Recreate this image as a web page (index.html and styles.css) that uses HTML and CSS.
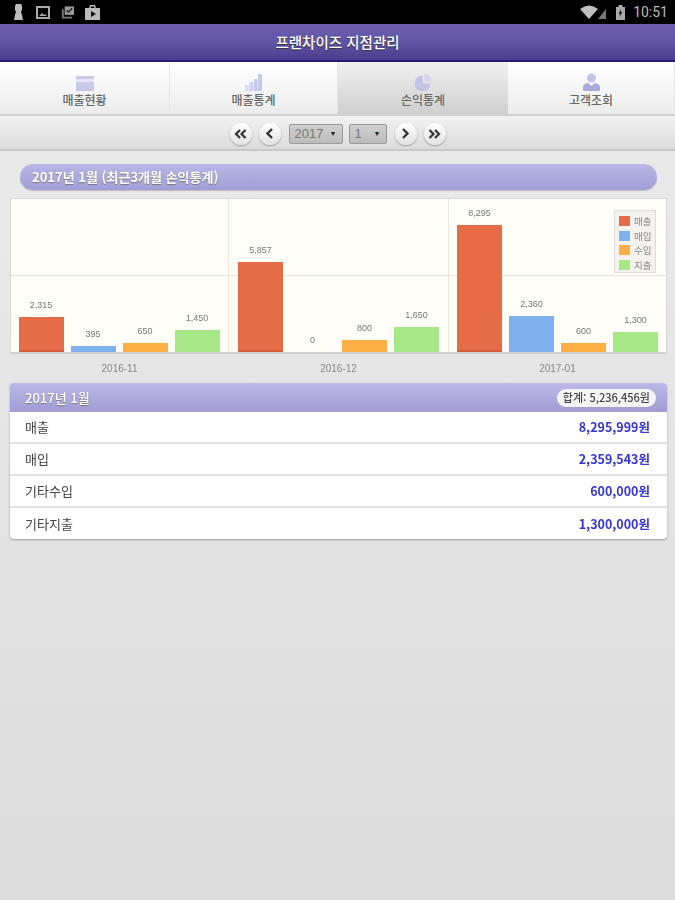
FILE: index.html
```html
<!DOCTYPE html>
<html lang="ko">
<head>
  <meta charset="UTF-8">
  <title>프랜차이즈 지점관리</title>
  <link rel="stylesheet" href="styles.css">
</head>
<body>

  <div class="statusbar">
    <div class="status-left">
      <svg width="13" height="17" viewBox="0 0 13 17"><path fill="#bdbdbd" d="M3 0h5l1 2v4L8 8l1 3 1 5H1l1-5 1-3-1-2V2z"/></svg>
      <svg width="14" height="13" viewBox="0 0 14 13"><path fill="none" stroke="#aaa" stroke-width="2" d="M1 1h12v11H1z"/><path fill="#aaa" d="M3 10l3-3 2 2 1-1 2 2z"/></svg>
      <svg width="15" height="15" viewBox="0 0 16 15"><path fill="#999" d="M5 1h10v9H5z"/><path fill="#777" d="M2 4h2v8h9v2H2z"/><path fill="none" stroke="#222" stroke-width="1.500" d="M7 5l2 2 4-4"/></svg>
      <svg width="15" height="15" viewBox="0 0 15 15"><path fill="#bbb" d="M5 0h5l1 3h4v12H0V3h4zM6 1.500l-.5 1.500h4L9 1.500z"/><path fill="#111" d="M6 6l5 3-5 3z"/></svg>
    </div>
    <div class="status-right">
      <svg class="wifi" width="27" height="15" viewBox="0 0 27 15"><path fill="#c0c0c0" d="M0 4Q9-3 18 4l-9 10z"/><path fill="#777" d="M18 14L26 4v10z"/></svg>
      <svg width="9" height="15" viewBox="0 0 9 15"><path fill="#aaa" d="M2.500 0h4v2H9v13H0V2h2.500z"/><path fill="#222" d="M5 4L2.500 9H4l-.5 3L6.500 7H5z"/></svg>
      <span class="clock">10:51</span>
    </div>
  </div>

  <div class="appbar">프랜차이즈 지점관리</div>

  <div class="tabs">
    <div class="tab">
      <svg width="18" height="15" viewBox="0 0 18 15"><path fill="#c8c8e8" d="M1 0h16a1 1 0 0 1 1 1v13a1 1 0 0 1-1 1H1a1 1 0 0 1-1-1V1a1 1 0 0 1 1-1z"/><path fill="#e6e6f2" d="M0 3h18v3H0z"/></svg>
      <span>매출현황</span>
    </div>
    <div class="tab">
      <svg width="17" height="17" viewBox="0 0 17 17"><path fill="#dcdcf0" d="M0 11h4v6H0z"/><path fill="#d0d0ec" d="M4.500 8h4v9h-4z"/><path fill="#c8c8e8" d="M9 5h3.500v12H9zM13 0h4v17h-4z"/></svg>
      <span>매출통계</span>
    </div>
    <div class="tab tab-active">
      <svg width="17" height="17" viewBox="0 0 17 17"><path fill="#c3c3e8" d="M7.500 1.500v8h8a8 8 0 1 1-8-8z"/><path fill="#d6d6ef" d="M9.500 0a7.500 7.500 0 0 1 7.500 7.500H9.500z"/></svg>
      <span>손익통계</span>
    </div>
    <div class="tab">
      <svg width="17" height="18" viewBox="0 0 17 18"><circle cx="8.500" cy="5" r="4.500" fill="#c3c3e8"/><path fill="#a9a9da" d="M0 18v-4q0-3 5-4l3.500 3 3.500-3q5 1 5 4v4z"/></svg>
      <span>고객조회</span>
    </div>
  </div>

  <div class="pager">
    <button class="round-btn"><svg width="13" height="10" viewBox="0 0 13 10"><path fill="none" stroke="#333" stroke-width="2.200" d="M6 1L2 5l4 4M11.500 1l-4 4 4 4"/></svg></button>
    <button class="round-btn"><svg width="9" height="11" viewBox="0 0 9 11"><path fill="none" stroke="#333" stroke-width="2.400" d="M7 1L2.500 5.500 7 10"/></svg></button>
    <div class="fake-select year"><span>2017</span><i>▼</i></div>
    <div class="fake-select month"><span>1</span><i>▼</i></div>
    <button class="round-btn"><svg width="9" height="11" viewBox="0 0 9 11"><path fill="none" stroke="#333" stroke-width="2.400" d="M2 1l4.500 4.500L2 10"/></svg></button>
    <button class="round-btn"><svg width="13" height="10" viewBox="0 0 13 10"><path fill="none" stroke="#333" stroke-width="2.200" d="M1.500 1l4 4-4 4M7 1l4 4-4 4"/></svg></button>
  </div>

  <div class="content">
    <div class="pill-title">2017년 1월 (최근3개월 손익통계)</div>

    <div class="chart">
      <div class="midline"></div>
      <div class="legend">
        <div class="legend-row"><b class="red"></b>매출</div>
        <div class="legend-row"><b class="blue"></b>매입</div>
        <div class="legend-row"><b class="orange"></b>수입</div>
        <div class="legend-row"><b class="green"></b>지출</div>
      </div>
      <div class="group">
        <div class="bar-col"><span>2,315</span><div class="bar red" style="height:35px"></div></div>
        <div class="bar-col"><span>395</span><div class="bar blue" style="height:6px"></div></div>
        <div class="bar-col"><span>650</span><div class="bar orange" style="height:9px"></div></div>
        <div class="bar-col"><span>1,450</span><div class="bar green" style="height:22px"></div></div>
      </div>
      <div class="group">
        <div class="bar-col"><span>5,857</span><div class="bar red" style="height:90px"></div></div>
        <div class="bar-col"><span>0</span><div class="bar" style="height:0"></div></div>
        <div class="bar-col"><span>800</span><div class="bar orange" style="height:12px"></div></div>
        <div class="bar-col"><span>1,650</span><div class="bar green" style="height:25px"></div></div>
      </div>
      <div class="group">
        <div class="bar-col"><span>8,295</span><div class="bar red" style="height:127px"></div></div>
        <div class="bar-col"><span>2,360</span><div class="bar blue" style="height:36px"></div></div>
        <div class="bar-col"><span>600</span><div class="bar orange" style="height:9px"></div></div>
        <div class="bar-col"><span>1,300</span><div class="bar green" style="height:20px"></div></div>
      </div>
    </div>
    <div class="x-labels">
      <span>2016-11</span>
      <span>2016-12</span>
      <span>2017-01</span>
    </div>

    <div class="card">
      <div class="card-head">
        <span>2017년 1월</span>
        <span class="total">합계: 5,236,456원</span>
      </div>
      <div class="row"><span>매출</span><span class="money">8,295,999원</span></div>
      <div class="row"><span>매입</span><span class="money">2,359,543원</span></div>
      <div class="row"><span>기타수입</span><span class="money">600,000원</span></div>
      <div class="row"><span>기타지출</span><span class="money">1,300,000원</span></div>
    </div>
  </div>

</body>
</html>
```

FILE: styles.css
```css
* {
  box-sizing: border-box;
}
html, body {
  height: 100%;
}
body {
  margin: 0;
  font-family: 'Noto Sans CJK KR', 'Noto Sans', sans-serif;
  background: linear-gradient(#ececec, #dcdcdc);
  overflow: hidden;
  filter: blur(0.55px);
}

.statusbar {
  height: 24px;
  background: #000;
  display: flex;
  justify-content: space-between;
  align-items: center;
  padding: 0 7px 0 13px;
}
.status-left {
  display: flex;
  align-items: center;
  gap: 10px;
}
.status-right {
  display: flex;
  align-items: center;
  gap: 8px;
}
.wifi {
  margin-right: 1px;
}
.clock {
  font-family: Roboto, sans-serif;
  font-size: 14px;
  color: #bbb;
}

.appbar {
  height: 38px;
  background: linear-gradient(#6c5cae, #6558a8 40%, #4c3d8e);
  border-bottom: 2px solid #2a1a78;
  color: #fff;
  font-size: 14.500px;
  font-weight: 500;
  line-height: 36px;
  text-align: center;
  text-shadow: 0 1px 1px #333;
}

.tabs {
  height: 54px;
  display: grid;
  grid-template-columns: 170px 168px 170px 167px;
  background: linear-gradient(#fff, #ececec);
  border-bottom: 2px solid #d0d0d0;
}
.tab {
  display: flex;
  flex-direction: column;
  align-items: center;
  justify-content: flex-end;
  gap: 2px;
  padding-bottom: 7px;
  border-right: 1px solid #e6e6e6;
  font-size: 12px;
  font-weight: 500;
  color: #666;
}
.tab span {
  line-height: 14px;
}
.tab-active {
  background: linear-gradient(#f0f0f0, #d0d0d0);
  border-right: 0;
}

.pager {
  height: 35px;
  padding-top: 2px;
  display: flex;
  align-items: center;
  justify-content: center;
  gap: 7px;
  background: linear-gradient(#f2f2f2, #dcdcdc);
  border-bottom: 2px solid #c8c8c8;
}
.round-btn {
  width: 22px;
  height: 22px;
  padding: 0;
  border: 0;
  border-radius: 50%;
  background: linear-gradient(#fff, #e2e2e2);
  box-shadow: 0 1px 2px #999;
  display: flex;
  align-items: center;
  justify-content: center;
}
.fake-select {
  height: 20px;
  display: flex;
  align-items: center;
  justify-content: space-between;
  padding: 0 5px;
  background: linear-gradient(#d0d0d0, #bcbcbc);
  border: 1px solid #999;
  border-radius: 2px;
  font-family: 'Liberation Sans', sans-serif;
  font-size: 13px;
  color: #777;
}
.fake-select i {
  font-style: normal;
  font-size: 7px;
  color: #222;
}
.year {
  width: 54px;
  margin-left: 1px;
}
.month {
  width: 38px;
  margin-right: 1px;
  margin-left: -1px;
}

.content {
  padding: 13px 8px 0 10px;
}
.pill-title {
  height: 26px;
  margin: 0 10px 8px;
  padding-left: 12px;
  border-radius: 13px;
  background: linear-gradient(#b9b7e6, #a09ed6);
  box-shadow: 0 1px 1px #bbb;
  color: #fff;
  font-size: 13px;
  font-weight: 700;
  line-height: 25px;
  text-shadow: 0 1px 1px #777;
}

.chart {
  position: relative;
  height: 156px;
  display: grid;
  grid-template-columns: 218px 220px 1fr;
  background: #fffdf8;
  border: 1px solid #d9d9d9;
  border-bottom: 2px solid #cfcfcf;
}
.midline {
  position: absolute;
  left: 0;
  right: 0;
  top: 76px;
  border-top: 1px solid #e8e6df;
}
.group {
  position: relative;
  display: flex;
  justify-content: center;
  align-items: flex-end;
  gap: 7px;
  border-right: 1px solid #e8e6df;
}
.group:nth-of-type(3) {
  padding-right: 1px;
}
.group:last-of-type {
  border-right: 0;
}
.bar-col {
  width: 45px;
  display: flex;
  flex-direction: column;
  align-items: center;
  gap: 6px;
}
.bar-col span {
  font-family: 'Liberation Sans', sans-serif;
  font-size: 9px;
  line-height: 11px;
  color: #777;
}
.bar {
  width: 100%;
}
.red {
  background: #e66c48;
}
.bar.red {
  box-shadow: inset 0 -2px #d95a38;
}
.blue {
  background: #7fb0ee;
}
.orange {
  background: #fbae46;
}
.green {
  background: #a6e885;
}

.legend {
  position: absolute;
  z-index: 1;
  top: 11px;
  right: 10px;
  width: 42px;
  height: 63px;
  padding: 3px 0 3px 4px;
  background: #f4f2ee;
  border: 1px solid #ddd;
}
.legend-row {
  height: 14.500px;
  display: flex;
  align-items: center;
  gap: 4px;
  font-size: 9.500px;
  white-space: nowrap;
  color: #888;
}
.legend-row b {
  flex: none;
  width: 11px;
  height: 10px;
}

.x-labels {
  display: grid;
  grid-template-columns: repeat(3, 1fr);
  height: 29px;
  padding-top: 9px;
  text-align: center;
  font-family: 'Liberation Sans', sans-serif;
  font-size: 10px;
  line-height: 12px;
  color: #888;
}

.card {
  background: #fff;
  border-radius: 4px;
  box-shadow: 0 1px 2px #999;
  overflow: hidden;
}
.card-head {
  height: 29px;
  display: flex;
  justify-content: space-between;
  align-items: center;
  padding: 0 11px 0 15px;
  background: linear-gradient(#bcb8e8, #a09cd4);
  color: #fff;
  font-size: 13px;
  font-weight: 500;
  text-shadow: 0 1px 1px #777;
}
.total {
  height: 18px;
  padding: 0 6px;
  border-radius: 9px;
  background: #f4f4f4;
  color: #444;
  font-size: 11px;
  line-height: 17px;
  text-shadow: none;
}
.row {
  height: 32px;
  display: flex;
  justify-content: space-between;
  align-items: center;
  padding: 0 17px 1px 15px;
  border-bottom: 2px solid #e2e2e2;
  font-size: 13px;
  color: #444;
}
.row:last-child {
  border-bottom: 0;
  height: 31px;
}
.money {
  color: #3434d8;
  font-size: 12.500px;
  font-weight: 700;
}
```
